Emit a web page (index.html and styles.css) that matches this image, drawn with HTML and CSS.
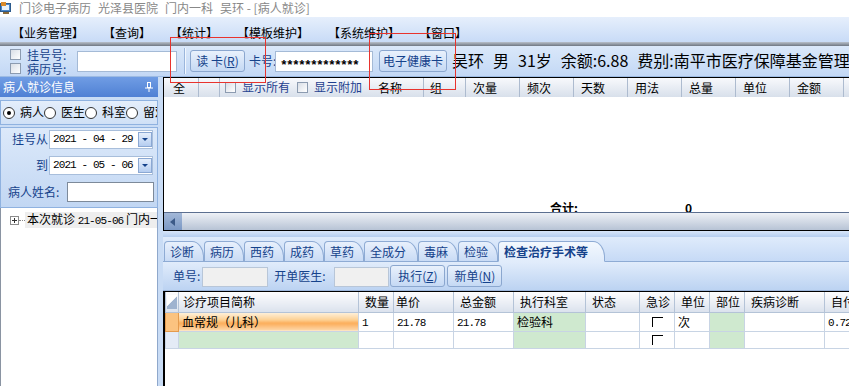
FILE: index.html
```html
<!DOCTYPE html>
<html lang="zh-CN">
<head>
  <meta charset="UTF-8">
  <title>门诊电子病历</title>
  <link rel="stylesheet" href="styles.css">
</head>
<body>
  <div class="titlebar">
    <svg class="app-icon" width="12" height="13" viewBox="0 0 12 13">
      <rect x="0.5" y="1.5" width="10" height="8" fill="#4a86c8" stroke="#2c5a8c"/>
      <rect x="2" y="3" width="7" height="5" fill="#e8f2fc"/>
      <rect x="1" y="0" width="5" height="4" fill="#d98a2b"/>
      <rect x="3" y="10" width="6" height="2" fill="#8a6a3a"/>
    </svg>
    <span>门诊电子病历</span><span>光泽县医院</span><span>门内一科</span><span>吴环 - [病人就诊]</span>
  </div>

  <div class="menubar">
    <span>【业务管理】</span>
    <span>【查询】</span>
    <span>【统计】</span>
    <span>【模板维护】</span>
    <span>【系统维护】</span>
    <span>【窗口】</span>
  </div>
  <div class="menu-sep"></div>

  <div class="toolbar">
    <div class="reg-checks">
      <div class="chk-row"><i class="chk"></i>挂号号:</div>
      <div class="chk-row"><i class="chk"></i>病历号:</div>
    </div>
    <div class="field reg-no"></div>
    <div class="tb-sep"></div>
    <div class="btn read-card">读 卡(<u>R</u>)</div>
    <span class="lbl card-lbl">卡号:</span>
    <div class="field card-no"><span class="stars">*************</span></div>
    <div class="btn health-card">电子健康卡</div>
    <div class="patient">
      <span>吴环</span><span>男</span><span>31岁</span><span>余额:6.88</span><span>费别:南平市医疗保障基金管理中心</span>
    </div>
  </div>

  <div class="main">
    <div class="left">
      <div class="panel-head">
        病人就诊信息
        <svg class="pin" width="8" height="10" viewBox="0 0 8 10">
          <rect x="2.5" y="0.5" width="3" height="5" fill="none" stroke="#fff"/>
          <line x1="0" y1="6" x2="8" y2="6" stroke="#fff"/>
          <line x1="4" y1="6" x2="4" y2="10" stroke="#fff"/>
        </svg>
      </div>

      <div class="radio-box">
        <span class="radio on"></span><span class="radio-lbl">病人</span>
        <span class="radio"></span><span class="radio-lbl">医生</span>
        <span class="radio"></span><span class="radio-lbl">科室</span>
        <span class="radio"></span><span class="radio-lbl">留观</span>
      </div>

      <div class="query-box">
        <div class="q-row">
          <span class="lbl q-lbl">挂号从</span>
          <div class="date"><span class="h">2021 - 04 - 29</span><i class="drop"></i></div>
        </div>
        <div class="q-row">
          <span class="lbl q-lbl">到</span>
          <div class="date"><span class="h">2021 - 05 - 06</span><i class="drop"></i></div>
        </div>
        <div class="q-row">
          <span class="lbl name-lbl">病人姓名:</span>
          <div class="name-input"></div>
        </div>
      </div>

      <div class="tree">
        <div class="tree-row">
          <i class="plus"></i><i class="dots"></i>
          <span class="node">本次就诊 <span class="h">21-05-06</span> 门内一科</span>
        </div>
      </div>
    </div>

    <div class="right">
      <div class="rx-grid">
        <div class="rx-head">
          <div class="hc c-all">全</div>
          <div class="hc c-blank"></div>
          <div class="c-opts">
            <i class="chk"></i><span class="opt">显示所有</span>
            <i class="chk"></i><span class="opt">显示附加</span>
          </div>
          <div class="hc c-name">名称</div>
          <div class="hc c-grp">组</div>
          <div class="hc">次量</div>
          <div class="hc">频次</div>
          <div class="hc">天数</div>
          <div class="hc">用法</div>
          <div class="hc">总量</div>
          <div class="hc">单位</div>
          <div class="hc">金额</div>
        </div>
        <div class="rx-body">
          <div class="rx-total"><b class="sum-lbl">合计:</b><b class="sum-val">0</b></div>
        </div>
        <div class="hscroll">
          <div class="sb-btn"><i class="arrow-left"></i></div>
          <div class="sb-track"></div>
        </div>
      </div>

      <div class="splitter"></div>

      <div class="tabs">
        <span class="tab">诊断</span>
        <span class="tab">病历</span>
        <span class="tab">西药</span>
        <span class="tab">成药</span>
        <span class="tab">草药</span>
        <span class="tab wide">全成分</span>
        <span class="tab">毒麻</span>
        <span class="tab">检验</span>
        <span class="tab on">检查治疗手术等</span>
      </div>

      <div class="subbar">
        <span class="lbl">单号:</span>
        <div class="sub-input order-no"></div>
        <span class="lbl doc-lbl">开单医生:</span>
        <div class="sub-input doctor"></div>
        <div class="btn sub-btn">执行(<u>Z</u>)</div>
        <div class="btn sub-btn">新单(<u>N</u>)</div>
      </div>

      <div class="item-grid">
        <table>
          <colgroup>
            <col style="width:13px"><col style="width:180px"><col style="width:35px"><col style="width:60px">
            <col style="width:60px"><col style="width:72px"><col style="width:54px"><col style="width:35px">
            <col style="width:35px"><col style="width:35px"><col style="width:80px"><col style="width:60px">
          </colgroup>
          <thead>
            <tr>
              <th class="corner"><i></i></th>
              <th class="th-name">诊疗项目简称</th>
              <th>数量</th>
              <th class="th-price">单价</th>
              <th>总金额</th>
              <th>执行科室</th>
              <th>状态</th>
              <th>急诊</th>
              <th>单位</th>
              <th>部位</th>
              <th>疾病诊断</th>
              <th>自付比例</th>
            </tr>
          </thead>
          <tbody>
            <tr class="cur">
              <td class="rh"></td>
              <td class="name">血常规（儿科）</td>
              <td><span class="h">1</span></td>
              <td><span class="h">21.78</span></td>
              <td><span class="h">21.78</span></td>
              <td class="green">检验科</td>
              <td></td>
              <td class="ctr"><i class="tick"></i></td>
              <td>次</td>
              <td class="green"></td>
              <td></td>
              <td><span class="h">0.72</span></td>
            </tr>
            <tr>
              <td class="rh"></td>
              <td class="green"></td>
              <td></td>
              <td></td>
              <td></td>
              <td class="green"></td>
              <td></td>
              <td class="ctr"><i class="tick"></i></td>
              <td></td>
              <td class="green"></td>
              <td></td>
              <td></td>
            </tr>
          </tbody>
        </table>
      </div>
    </div>
  </div>

  <div class="mark mark-a"></div>
  <div class="mark mark-b"></div>
</body>
</html>
```

FILE: styles.css
```css
* {
  box-sizing: border-box;
}

body {
  margin: 0;
  width: 849px;
  height: 386px;
  overflow: hidden;
  position: relative;
  font: 12px/1.2 "Noto Sans CJK SC", sans-serif;
  color: #000;
  background: #c9dcf5;
}

/* half-width text, like the old song font */
.h {
  font-family: "Liberation Mono", monospace;
  font-size: 11px;
  letter-spacing: -0.9px;
}

.lbl {
  color: #15428b;
  white-space: nowrap;
}

/* title + menu */
.titlebar {
  height: 17px;
  background: #fff;
  display: flex;
  align-items: center;
  gap: 7px;
  color: #888;
  white-space: nowrap;
}

.menubar {
  height: 25px;
  padding: 7px 0 0 12px;
  display: flex;
  align-items: center;
  gap: 19px;
  background: linear-gradient(#e6effc, #c8dbf7);
  white-space: nowrap;
}

.menu-sep {
  height: 4px;
  background: linear-gradient(#b8c0cb, #6f7783);
}

/* toolbar */
.toolbar {
  height: 31px;
  display: flex;
  align-items: center;
  background: linear-gradient(#dae8fa, #c3d8f5);
  border-bottom: 1px solid #9dbbe3;
  white-space: nowrap;
  overflow: hidden;
}

.toolbar > * {
  flex: none;
}

.reg-checks {
  width: 77px;
  padding-left: 10px;
  display: flex;
  flex-direction: column;
}

.chk-row {
  height: 14px;
  line-height: 13px;
  display: flex;
  align-items: center;
  color: #15428b;
}

.chk {
  display: inline-block;
  width: 11px;
  height: 11px;
  border: 1px solid #8c9bb0;
  background: linear-gradient(135deg, #d9dee6, #fff);
  margin-right: 6px;
  flex: none;
}

.field {
  height: 21px;
  background: #fff;
  border: 1px solid #a4bad6;
}

.reg-no {
  width: 100px;
}

.tb-sep {
  width: 2px;
  height: 26px;
  margin: 0 4px 0 7px;
  border-left: 1px solid #9bb6dc;
  border-right: 1px solid #f2f7fe;
}

.btn {
  height: 22px;
  display: flex;
  align-items: center;
  justify-content: center;
  border: 1px solid #8ba7cf;
  border-radius: 3px;
  background: linear-gradient(#e9f1fc, #c5d9f4);
  color: #15428b;
  white-space: nowrap;
}

.read-card {
  width: 55px;
}

.card-lbl {
  width: 26px;
  margin-left: 4px;
}

.card-no {
  width: 98px;
  padding: 3px 0 0 4px;
  line-height: 17px;
  overflow: hidden;
}

.stars {
  font-family: "Liberation Mono", monospace;
  font-size: 13px;
  font-weight: bold;
  letter-spacing: -1.8px;
}

.health-card {
  width: 68px;
  margin-left: 6px;
}

.patient {
  margin-left: 5px;
  font-size: 16px;
  display: flex;
  gap: 9px;
}

/* main area */
.main {
  height: 309px;
  display: flex;
  gap: 5px;
}

.left {
  width: 158px;
  flex: none;
  display: flex;
  flex-direction: column;
}

.panel-head {
  height: 20px;
  padding-left: 3px;
  display: flex;
  align-items: center;
  justify-content: space-between;
  padding-right: 5px;
  color: #fff;
  background: linear-gradient(#709de4, #4f80d4);
}

.radio-box {
  height: 25px;
  margin-top: 3px;
  padding-left: 2px;
  display: flex;
  align-items: center;
  border: 1px solid #8fb2e0;
  background: linear-gradient(#e4eefb, #cfe0f6);
  overflow: hidden;
  white-space: nowrap;
}

.radio {
  width: 12px;
  height: 12px;
  flex: none;
  border: 1px solid #333;
  border-radius: 50%;
  background: #fff;
  margin-right: 5px;
  position: relative;
}

.radio.on::after {
  content: "";
  position: absolute;
  left: 3px;
  top: 3px;
  width: 4px;
  height: 4px;
  border-radius: 50%;
  background: #000;
}

.radio-lbl {
  width: 24px;
  flex: none;
}

.query-box {
  height: 81px;
  margin-top: 2px;
  padding-top: 2px;
  border: 1px solid #8fb2e0;
  background: linear-gradient(#dce9fa, #c2d7f3);
}

.q-row {
  display: flex;
  align-items: center;
  margin-bottom: 7px;
}

.q-lbl {
  width: 47px;
  text-align: right;
  margin-right: 1px;
}

.date {
  width: 104px;
  height: 19px;
  padding-left: 3px;
  display: flex;
  align-items: center;
  background: #fff;
  border: 1px solid #a8bedb;
  white-space: pre;
}

.drop {
  margin-left: auto;
  width: 14px;
  height: 15px;
  flex: none;
  border: 1px solid #8ba8d3;
  background: linear-gradient(#e6effc, #b5cdf0);
  position: relative;
}

.drop::after {
  content: "";
  position: absolute;
  left: 3px;
  top: 5px;
  border: 3px solid transparent;
  border-top: 3px solid #15428b;
}

.name-lbl {
  width: 66px;
  padding-left: 7px;
}

.name-input {
  width: 87px;
  height: 20px;
  background: #fff;
  border: 1px solid #7d8a9a;
}

.tree {
  flex: 1;
  background: #fff;
  border-left: 1px solid #8a94a2;
  border-right: 1px solid #8fa8cc;
  padding-top: 4px;
}

.tree-row {
  height: 16px;
  display: flex;
  align-items: center;
  white-space: nowrap;
  overflow: hidden;
}

.plus {
  width: 9px;
  height: 9px;
  margin-left: 9px;
  border: 1px solid #8c8c8c;
  background: #fff;
  position: relative;
  flex: none;
}

.plus::before {
  content: "";
  position: absolute;
  left: 1px;
  top: 3px;
  width: 5px;
  height: 1px;
  background: #333;
}

.plus::after {
  content: "";
  position: absolute;
  left: 3px;
  top: 1px;
  width: 1px;
  height: 5px;
  background: #333;
}

.dots {
  width: 6px;
  border-top: 1px dotted #888;
  flex: none;
}

.node {
  background: #eee;
  padding-left: 2px;
}

/* prescription grid */
.right {
  flex: 1;
  min-width: 0;
  display: flex;
  flex-direction: column;
}

.rx-grid {
  height: 154px;
  border-top: 1px solid #000;
  border-left: 1px solid #000;
  border-bottom: 1px solid #000;
  display: flex;
  flex-direction: column;
  overflow: hidden;
}

.rx-head {
  height: 19px;
  display: flex;
  background: linear-gradient(#f8f9fc, #d8e0eb);
  white-space: nowrap;
}

.hc {
  width: 54px;
  flex: none;
  padding-left: 7px;
  line-height: 19px;
  border-right: 1px solid #adbbcf;
}

.hc.c-all {
  width: 35px;
  padding-left: 9px;
}

.hc.c-blank {
  width: 21px;
}

.c-opts {
  width: 151px;
  flex: none;
  display: flex;
  align-items: center;
  padding-left: 5px;
}

.opt {
  color: #1e3f8f;
  margin-right: 7px;
}

.hc.c-name {
  width: 53px;
}

.hc.c-grp {
  width: 42px;
  padding-left: 6px;
}

.rx-body {
  height: 116px;
  background: #fff;
  border-bottom: 1px solid #5c6f90;
  display: flex;
  align-items: flex-end;
}

.rx-total {
  height: 11px;
  line-height: 13px;
  overflow: hidden;
  display: flex;
}

.sum-lbl {
  margin-left: 386px;
  width: 135px;
}

.hscroll {
  height: 17px;
  display: flex;
}

.sb-btn {
  width: 18px;
  background: linear-gradient(#a3b8d8, #7b98c4);
  display: flex;
  align-items: center;
  justify-content: center;
}

.arrow-left {
  border: 4px solid transparent;
  border-right: 5px solid #3c5a88;
  margin-left: -5px;
}

.sb-track {
  flex: 1;
  background: linear-gradient(#eef1f6, #b7c3d5);
}

.splitter {
  height: 6px;
  background: linear-gradient(#d8e6f9, #b4cdef);
}

/* tabs */
.tabs {
  height: 25px;
  padding-left: 1px;
  display: flex;
  align-items: flex-end;
  background: linear-gradient(#dfebfb, #c6daf6);
  border-bottom: 1px solid #8eabd4;
}

.tab {
  width: 40px;
  height: 21px;
  margin-bottom: -1px;
  padding-left: 5px;
  line-height: 20px;
  flex: none;
  color: #15428b;
  border: 1px solid #8eabd4;
  border-radius: 4px 12px 0 0 / 4px 16px 0 0;
  background: linear-gradient(#e8f0fc, #c9dbf5);
  white-space: nowrap;
}

.tab.wide {
  width: 54px;
}

.tab.on {
  width: 107px;
  font-weight: bold;
  border-bottom-color: #e1ecfb;
  background: linear-gradient(#f3f8fe, #e1ecfb);
}

.subbar {
  height: 29px;
  padding-left: 10px;
  display: flex;
  align-items: center;
  background: linear-gradient(#e1ecfb, #bcd3f2);
  border-bottom: 1px solid #9bb5da;
}

.subbar > * {
  flex: none;
}

.sub-input {
  height: 20px;
  margin-top: 2px;
  background: #f0f0f0;
  border: 1px solid #b8c6d8;
}

.order-no {
  width: 66px;
  margin-left: 2px;
}

.doc-lbl {
  margin-left: 6px;
  width: 60px;
}

.doctor {
  width: 55px;
}

.sub-btn {
  width: 55px;
  margin-left: 1px;
}

.sub-btn + .sub-btn {
  margin-left: 2px;
}

/* item grid */
.item-grid {
  flex: 1;
  background: #fff;
  border-left: 2px solid #000;
  border-top: 1px solid #000;
  overflow: hidden;
}

.item-grid table {
  width: 719px;
  table-layout: fixed;
  border-collapse: collapse;
}

.item-grid th {
  height: 20px;
  padding: 0 0 0 6px;
  text-align: left;
  font-weight: normal;
  white-space: nowrap;
  overflow: hidden;
  background: linear-gradient(#fdfdfe, #dbe2ed);
  border: 1px solid #b4c3d7;
  border-top: none;
}

.item-grid th.th-name {
  padding-left: 4px;
}

.item-grid th.th-price {
  padding-left: 2px;
}

.item-grid th.corner {
  padding: 2px 1px;
}

.corner i {
  display: block;
  width: 10px;
  height: 14px;
  background: linear-gradient(135deg, #fff 45%, #9fb3cf 50%);
}

.item-grid td {
  height: 17px;
  padding: 0 0 0 3px;
  line-height: 15px;
  white-space: nowrap;
  overflow: hidden;
  border: 1px solid #c8d4e4;
}

.item-grid td.rh {
  background: #e4ebf6;
}

.cur td.rh {
  background: #fbc380;
  border-color: #e49b4e;
}

.cur td.name {
  background: linear-gradient(#fef1dd, #fdd296 40%, #fcad5a 60%, #fdd8aa);
}

.item-grid td.green {
  background: #cfe9cf;
}

.item-grid td.ctr {
  text-align: center;
  padding: 0;
}

.tick {
  display: inline-block;
  width: 11px;
  height: 10px;
  margin-top: 3px;
  border-top: 1px solid #000;
  border-left: 1px solid #000;
}

/* red annotation boxes drawn over the screenshot */
.mark {
  position: absolute;
  border: 1px solid #e8332e;
  pointer-events: none;
}

.mark-a {
  left: 170px;
  top: 37px;
  width: 96px;
  height: 46px;
}

.mark-b {
  left: 369px;
  top: 33px;
  width: 87px;
  height: 57px;
}
```
